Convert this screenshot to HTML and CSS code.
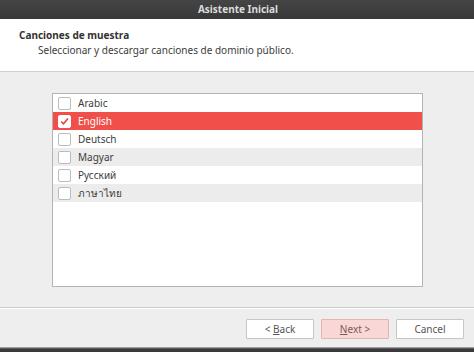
FILE: index.html
```html
<!DOCTYPE html>
<html lang="es">
<head>
<meta charset="utf-8">
<title>Asistente Inicial</title>
<link rel="stylesheet" href="styles.css">
</head>
<body>
<div class="window">
  <div class="titlebar">Asistente Inicial</div>
  <div class="header">
    <div class="h-title">Canciones de muestra</div>
    <div class="h-sub">Seleccionar y descargar canciones de dominio público.</div>
  </div>
  <div class="content">
    <div class="listbox">
      <div class="row"><span class="cb"></span><span class="label">Arabic</span></div>
      <div class="row selected"><span class="cb checked"><svg viewBox="0 0 13 13" width="13" height="13"><path d="M2.5 6.5 L5.3 9.2 L10.6 3" fill="none" stroke="#e8453f" stroke-width="2"/></svg></span><span class="label">English</span></div>
      <div class="row"><span class="cb"></span><span class="label">Deutsch</span></div>
      <div class="row alt"><span class="cb"></span><span class="label">Magyar</span></div>
      <div class="row"><span class="cb"></span><span class="label">Русский</span></div>
      <div class="row alt"><span class="cb"></span><span class="label thai">ภาษาไทย</span></div>
    </div>
  </div>
  <div class="footer">
    <button class="btn">&lt; <u>B</u>ack</button>
    <button class="btn next"><u>N</u>ext &gt;</button>
    <button class="btn">Cancel</button>
  </div>
  <div class="bottomstrip"></div>
</div>
</body>
</html>
```

FILE: styles.css
```css
html, body {
  margin: 0;
  padding: 0;
}
body {
  width: 474px;
  height: 352px;
  overflow: hidden;
  font-family: "Noto Sans", "Open Sans", "DejaVu Sans", sans-serif;
  font-size: 10px;
  color: #3c3c3c;
  background: #eeeeee;
}
.window {
  display: flex;
  flex-direction: column;
  height: 352px;
}
.titlebar {
  height: 19px;
  flex: none;
  line-height: 19px;
  background: linear-gradient(#454545, #383838);
  color: #dcdcdc;
  font-weight: bold;
  font-size: 10px;
  text-align: center;
  padding-left: 2px;
}
.header {
  height: 53px;
  flex: none;
  background: #ffffff;
  border-bottom: 1px solid #cfcfcf;
  box-sizing: border-box;
  padding: 9px 0 0 19px;
}
.h-title {
  font-weight: bold;
  font-size: 10px;
  color: #333333;
  line-height: 15px;
}
.h-sub {
  padding-left: 19px;
  line-height: 15px;
  color: #3c3c3c;
}
.content {
  height: 236px;
  flex: none;
  box-sizing: border-box;
  padding: 21px 51px 0 52px;
  background: #eeeeee;
  border-bottom: 1px solid #cdcdcd;
}
.listbox {
  height: 194px;
  box-sizing: border-box;
  background: #ffffff;
  border: 1px solid #b4b4b4;
}
.row {
  height: 18px;
  display: flex;
  align-items: center;
  padding-left: 5px;
  color: #3c3c3c;
}
.row.alt {
  background: #ececec;
}
.row.selected {
  background: #f04f4a;
  color: #ffffff;
}
.cb {
  width: 13px;
  height: 13px;
  box-sizing: border-box;
  border: 1px solid #bcbcbc;
  border-radius: 2px;
  background: #ffffff;
  display: flex;
  align-items: center;
  justify-content: center;
  margin-right: 7px;
}
.cb.checked {
  border-color: #ffffff;
}
.cb svg {
  display: block;
}
.label {
  line-height: 18px;
}
.footer {
  height: 39px;
  flex: none;
  box-sizing: border-box;
  border-top: 1px solid #ffffff;
  display: flex;
  justify-content: flex-end;
  align-items: flex-start;
  padding: 10px 10px 0 0;
  gap: 7px;
}
.btn {
  width: 68px;
  height: 20px;
  box-sizing: border-box;
  border: 1px solid #c6c6c6;
  border-radius: 1px;
  background: #ffffff;
  font-family: "Noto Sans", "Open Sans", "DejaVu Sans", sans-serif;
  font-size: 10px;
  color: #555555;
  padding: 0;
  line-height: 18px;
}
.btn.next {
  background: #f8d7d6;
  border-color: #e6b3b1;
  color: #7a5a5a;
}
.btn u {
  text-decoration-thickness: 1px;
}
.bottomstrip {
  flex: 1;
  background: linear-gradient(#bdbdbd, #3a3a3a 2px);
}
```
